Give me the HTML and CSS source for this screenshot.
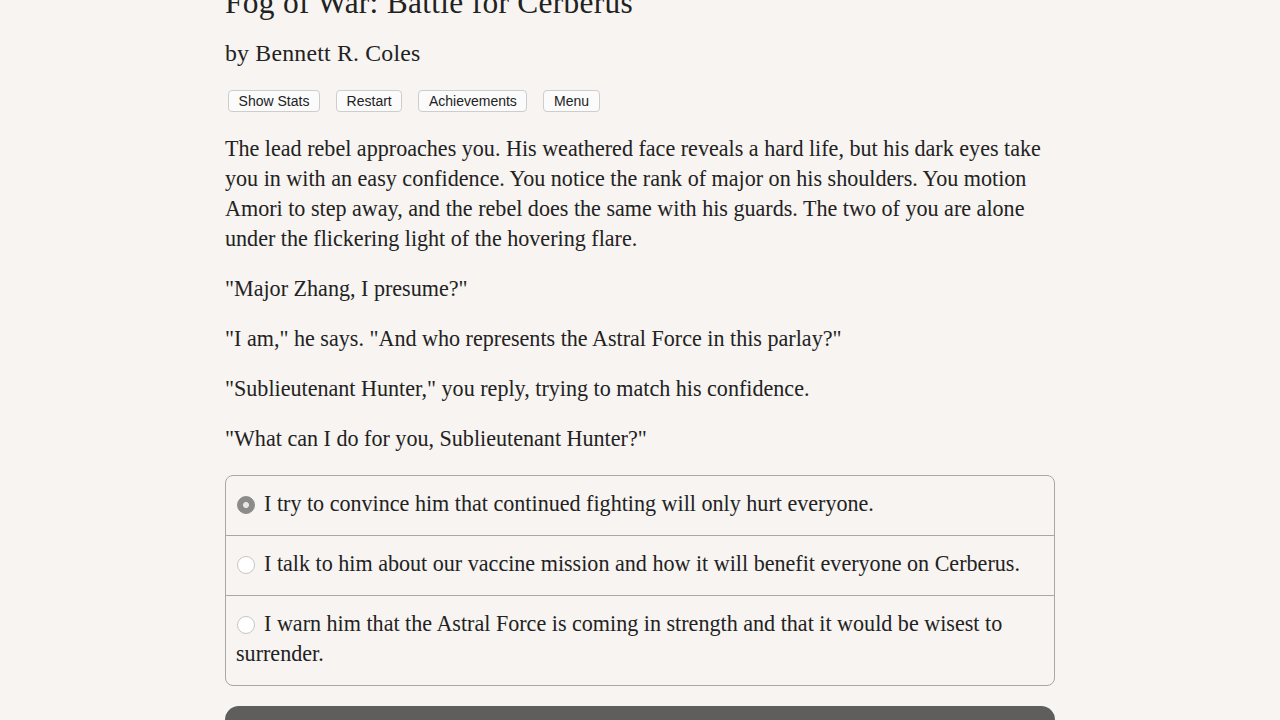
FILE: index.html
```html
<!DOCTYPE html>
<html>
<head>
<meta charset="utf-8">
<link rel="stylesheet" href="styles.css">
</head>
<body>
<div class="page">
  <h1 class="title">Fog of War: Battle for Cerberus</h1>
  <h2 class="author">by Bennett R. Coles</h2>
  <div class="buttons">
    <button class="btn">Show Stats</button>
    <button class="btn">Restart</button>
    <button class="btn">Achievements</button>
    <button class="btn">Menu</button>
  </div>
  <div class="text">
    <p>The lead rebel approaches you. His weathered face reveals a hard life, but his dark eyes take you in with an easy confidence. You notice the rank of major on his shoulders. You motion Amori to step away, and the rebel does the same with his guards. The two of you are alone under the flickering light of the hovering flare.</p>
    <p>"Major Zhang, I presume?"</p>
    <p>"I am," he says. "And who represents the Astral Force in this parlay?"</p>
    <p>"Sublieutenant Hunter," you reply, trying to match his confidence.</p>
    <p>"What can I do for you, Sublieutenant Hunter?"</p>
  </div>
  <div class="choices">
    <label class="choice"><span class="radio checked"></span>I try to convince him that continued fighting will only hurt everyone.</label>
    <label class="choice"><span class="radio"></span>I talk to him about our vaccine mission and how it will benefit everyone on Cerberus.</label>
    <label class="choice"><span class="radio"></span>I warn him that the Astral Force is coming in strength and that it would be wisest to surrender.</label>
  </div>
  <button class="next">Next</button>
</div>
</body>
</html>
```

FILE: styles.css
```css
html, body {
  margin: 0;
  padding: 0;
  background: #f7f4f1;
  overflow: hidden;
}
body {
  font-family: "Liberation Serif", "Times New Roman", serif;
  color: #222;
}
.page {
  width: 830px;
  margin: 0 auto;
  margin-top: -17px;
}
.title {
  font-size: 31.4px;
  font-weight: normal;
  margin: 0;
  line-height: 40px;
  letter-spacing: 0.3px;
}
.author {
  font-size: 23.8px;
  font-weight: normal;
  margin: 10px 0 0 0;
  line-height: 40px;
  letter-spacing: 0.2px;
}
.buttons {
  display: flex;
  gap: 16px;
  padding-left: 3px;
  margin-top: 17px;
}
.btn {
  font-family: "Liberation Sans", Arial, sans-serif;
  font-size: 14px;
  color: #222;
  background: #fbfbfb;
  border: 1px solid #cfcccc;
  border-radius: 4px;
  height: 22px;
  padding: 0 9.6px;
  line-height: 20px;
}
.text {
  margin-top: 22px;
  font-size: 22.1px;
  line-height: 30px;
}
.text p {
  margin: 0 0 20px 0;
  width: 820px;
}
.choices {
  margin-top: 21px;
  border: 1px solid #aaa8a6;
  border-radius: 8px;
  font-size: 22.1px;
  line-height: 30px;
}
.choice {
  display: block;
  padding: 13px 10px 16px 10px;
  border-top: 1px solid #aaa8a6;
}
.choice:first-child {
  border-top: none;
}
.radio {
  display: inline-block;
  width: 18px;
  height: 18px;
  border-radius: 50%;
  border: 1px solid #c8c6c4;
  background: #fff;
  margin: 0 9px 0 1px;
  vertical-align: -3px;
  box-sizing: border-box;
}
.radio.checked {
  background: radial-gradient(circle, #e6e6e6 0 2.6px, #8c8b8a 3.4px);
  border-color: #8c8b8a;
}
.next {
  display: block;
  width: 830px;
  height: 60px;
  margin-top: 20px;
  background: #5f5e5c;
  border: none;
  border-radius: 14px;
  color: #fff;
  font-family: "Liberation Serif", serif;
  font-size: 22px;
}
```
